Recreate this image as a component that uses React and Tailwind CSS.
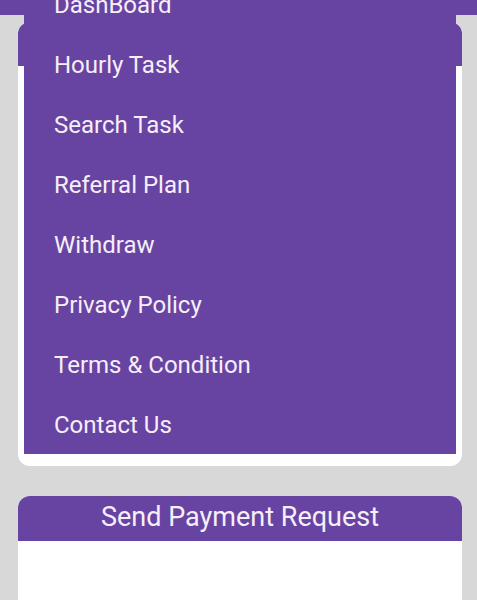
import React from "react";

const menuItems = [
  "DashBoard",
  "Hourly Task",
  "Search Task",
  "Referral Plan",
  "Withdraw",
  "Privacy Policy",
  "Terms & Condition",
  "Contact Us",
];

export default function App() {
  return (
    <div className="relative h-[600px] bg-[#d8d8d8] overflow-hidden" style={{ fontFamily: "Roboto, 'Noto Sans', sans-serif" }}>
      {/* Top bar */}
      <div className="h-[15px] bg-[#6844a2]" />

      <div className="pl-[18px] pr-[15px] pt-[7px]">
        {/* Main card */}
        <section className="h-[444px] bg-white rounded-[12px] overflow-hidden">
          <div className="h-[44px] bg-[#6844a2]" />
        </section>

        {/* Payment request card */}
        <section className="mt-[30px] h-[104px] bg-white rounded-t-[12px] overflow-hidden">
          <div className="h-[45px] bg-[#6844a2] flex items-center justify-center pb-[3px]">
            <h2 className="text-[27px] text-[#f6eef8] leading-none">Send Payment Request</h2>
          </div>
        </section>
      </div>

      {/* Dropdown menu */}
      <nav className="absolute left-[24px] top-[-26px] w-[432px] bg-[#6844a2]">
        {menuItems.map((item) => (
          <div key={item} className="h-[60px] flex items-center pl-[30px] pt-[1px] text-[24px] text-[#f6eef8]">
            {item}
          </div>
        ))}
      </nav>
    </div>
  );
}
